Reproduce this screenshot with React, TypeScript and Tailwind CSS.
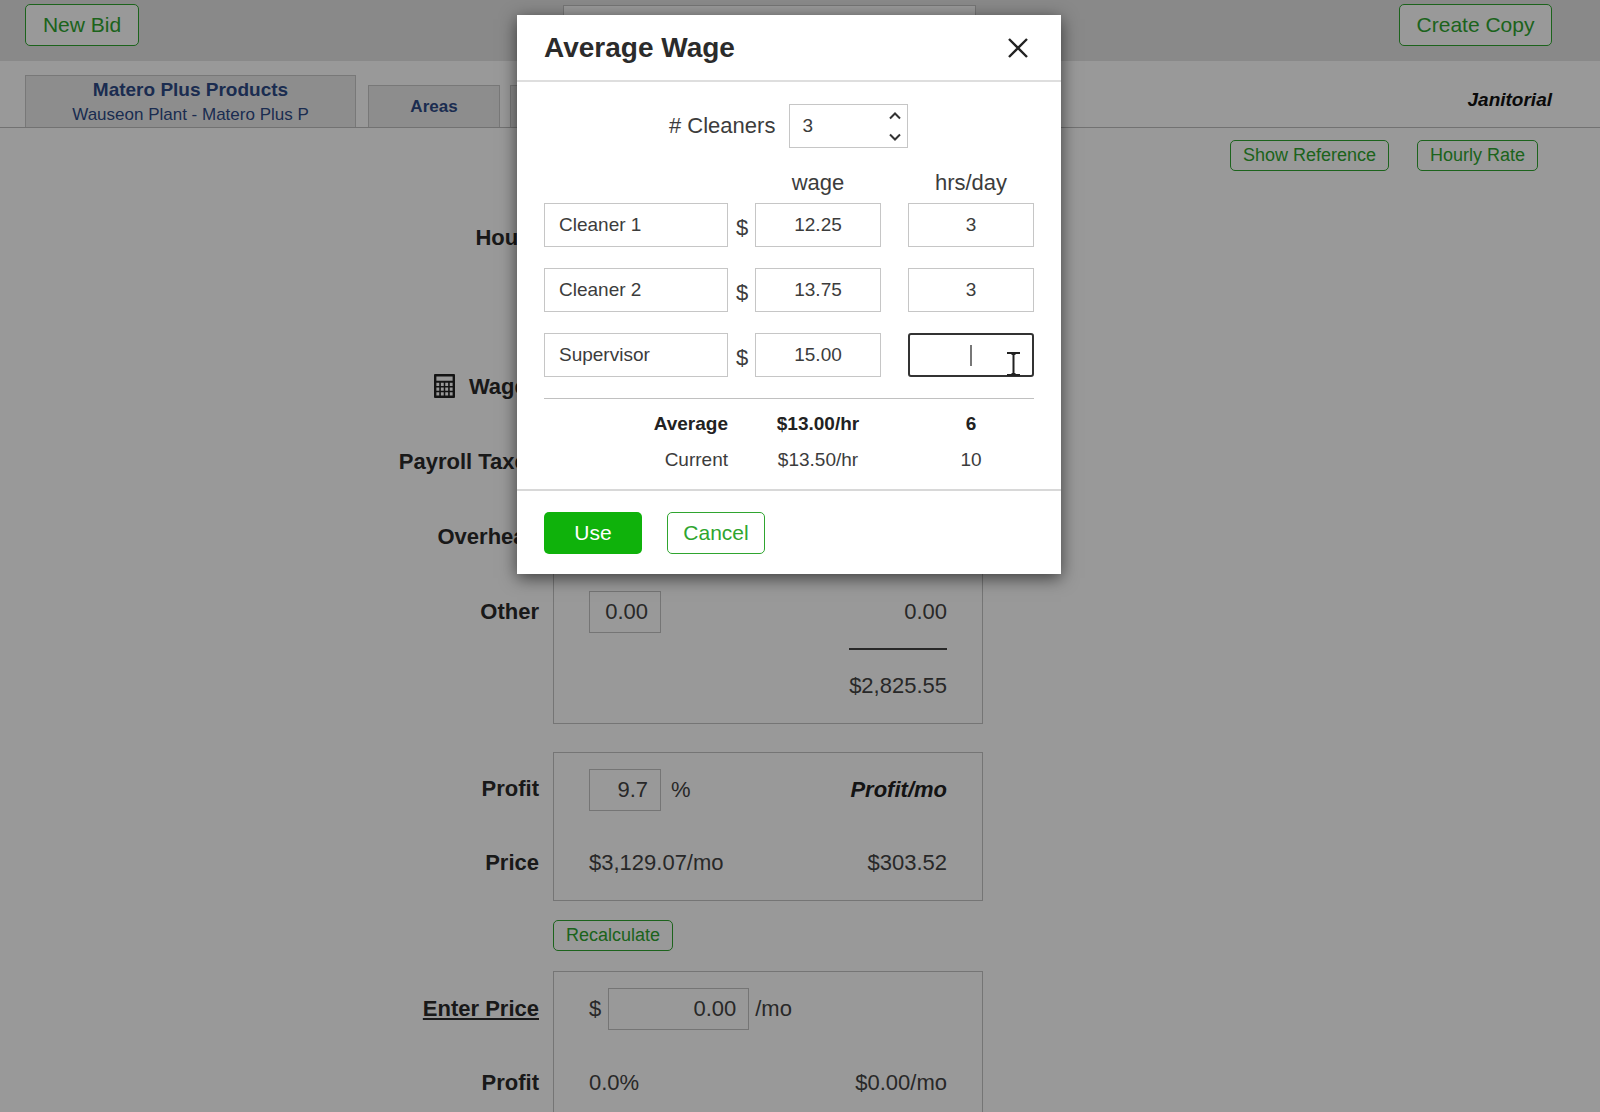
import { useState } from "react";

const rows = [
  { name: "Cleaner 1", wage: "12.25", hours: "3" },
  { name: "Cleaner 2", wage: "13.75", hours: "3" },
  { name: "Supervisor", wage: "15.00", hours: "" },
];

const outline = "border border-[#2fa52f] text-[#2fa52f] rounded-[5px] bg-white";
const largeButton = outline + " h-[42px] text-[21px] leading-6";
const smallButton = outline + " h-[31px] px-3 pb-0.5 text-[18px] leading-5";
const sectionGrid = "grid grid-cols-[539fr_430px_581fr] gap-x-[14px]";
const label = "flex h-[75px] items-center justify-end font-bold text-[#2b2b2b]";
const label74 = "flex h-[74px] items-center justify-end font-bold text-[#2b2b2b]";
const box = "border border-[#c4c4c4] px-[35px]";
const field = "border border-[#c4c4c4] bg-white text-right px-3 h-[42px] outline-none";
const tab = "flex h-[42px] w-[132px] items-center justify-center border border-b-0 border-[#c8c8c8] bg-[#ececec] text-[17px] font-bold text-[#2e4a86]";

function CalculatorIcon() {
  return (
    <svg width="21" height="24" viewBox="0 0 22 25" fill="#222" fillRule="evenodd" aria-hidden="true">
      <path d="M1 0h20a1 1 0 0 1 1 1v23a1 1 0 0 1-1 1H1a1 1 0 0 1-1-1V1a1 1 0 0 1 1-1zM2.500 2.500v4.500h17V2.500zM2.500 9v3.500h3V9zM7.200 9v3.500h3V9zM11.800 9v3.500h3V9zM16.500 9v3.500h3V9zM2.500 14v3.500h3v-3.500zM7.200 14v3.500h3v-3.500zM11.800 14v3.500h3v-3.500zM16.500 14v3.500h3v-3.500zM2.500 19v3.500h3v-3.500zM7.200 19v3.500h3v-3.500zM11.800 19v3.500h3v-3.500zM16.500 19v3.500h3v-3.500z" />
    </svg>
  );
}

function Header() {
  return (
    <header className="flex h-[61px] items-start justify-between bg-[#e4e4e4] pt-1 pr-12 pl-[25px]">
      <button className={largeButton + " w-[114px]"}>New Bid</button>
      <input aria-label="Bid" className="mt-px h-[42px] w-[413px] border border-[#c4c4c4] bg-white outline-none" />
      <button className={largeButton + " w-[153px]"}>Create Copy</button>
    </header>
  );
}

function TabBar() {
  return (
    <nav className="flex h-[67px] items-end border-b border-[#bebebe] pr-12 pl-[25px]">
      <a href="#bid" className="h-[52px] w-[331px] border border-b-0 border-[#c8c8c8] bg-[#ececec] pt-px text-center text-[#2e4a86]">
        <span className="block text-[19px] leading-[26px] font-bold">Matero Plus Products</span>
        <span className="block text-[17px] leading-6">Wauseon Plant - Matero Plus P</span>
      </a>
      <a href="#areas" className={tab + " ml-3"}>Areas</a>
      <a href="#tasks" aria-label="Next section" className={tab + " ml-[10px]"} />
      <span className="ml-auto pb-[15px] text-[19px] leading-6 font-bold text-[#111] italic">Janitorial</span>
    </nav>
  );
}

function Pricing() {
  return (
    <main className="text-[22px] leading-[26px] text-[#444]">
      <div className="flex h-[73px] items-start justify-end gap-7 pt-3 pr-10">
        <button className={smallButton}>Show Reference</button>
        <button className={smallButton}>Hourly Rate</button>
      </div>

      <section className={sectionGrid}>
        <div>
          <div className={label74}>Hours</div>
          <div className={label74}></div>
          <div className={label}>
            <button aria-label="Average wage" className="mr-[14px] mb-0.5">
              <CalculatorIcon />
            </button>
            Wages
          </div>
          <div className={label}>Payroll Taxes</div>
          <div className={label}>Overhead</div>
          <label htmlFor="other" className={label}>Other</label>
          <div className={label}></div>
        </div>
        <div className={box + " flex flex-col justify-end"}>
          <div className="flex h-[75px] items-center justify-between">
            <input id="other" defaultValue="0.00" className={field + " w-[72px]"} />
            <span>0.00</span>
          </div>
          <div className="flex h-[74px] items-center justify-end">
            <span className="relative">
              <span className="absolute -top-[25px] right-0 left-0 h-0 border-t-2 border-[#444]" />
              $2,825.55
            </span>
          </div>
        </div>
      </section>

      <section className={sectionGrid + " mt-7"}>
        <div>
          <label htmlFor="profit" className={label74}>Profit</label>
          <div className={label74}>Price</div>
        </div>
        <div className={box}>
          <div className="flex h-[73px] items-center">
            <input id="profit" defaultValue="9.7" className={field + " w-[72px]"} />
            <span className="ml-[10px]">%</span>
            <span className="ml-auto font-bold text-[#222] italic">Profit/mo</span>
          </div>
          <div className="flex h-[74px] items-center justify-between">
            <span>$3,129.07/mo</span>
            <span>$303.52</span>
          </div>
        </div>
      </section>

      <div className={sectionGrid + " pt-[19px] pb-5"}>
        <div />
        <div className="flex">
          <button className={smallButton}>Recalculate</button>
        </div>
      </div>

      <section className={sectionGrid}>
        <div>
          <label htmlFor="price" className={label + " underline"}>Enter Price</label>
          <div className={label74}>Profit</div>
          <div className={label74}></div>
        </div>
        <div className={box}>
          <div className="flex h-[74px] items-center">
            <span>$</span>
            <input id="price" defaultValue="0.00" className={field + " mr-[6px] ml-[7px] w-[141px]"} />
            <span>/mo</span>
          </div>
          <div className="flex h-[74px] items-center justify-between">
            <span>0.0%</span>
            <span>$0.00/mo</span>
          </div>
        </div>
      </section>
    </main>
  );
}

function Chevron({ up }: { up?: boolean }) {
  return (
    <svg width="12" height="8" viewBox="0 0 12 8" fill="none" stroke="#333" strokeWidth="2" aria-hidden="true">
      <path d={up ? "M1 6.500L6 1.500l5 5" : "M1 1.500l5 5 5-5"} />
    </svg>
  );
}

function WageDialog() {
  const [count, setCount] = useState(3);
  const input = "block h-11 w-full border border-[#c6c6c6] bg-white text-[19px] leading-6 outline-none";
  return (
    <div role="dialog" aria-label="Average Wage" className="w-full max-w-[544px] bg-white text-[#3c3c3c] shadow-[0_4px_16px_rgba(0,0,0,0.6)]">
      <div className="flex h-[67px] items-center justify-between border-b-2 border-[#dedede] pr-[33px] pl-[27px]">
        <h2 className="text-[28px] leading-8 font-bold text-[#2b2b2b]">Average Wage</h2>
        <button aria-label="Close">
          <svg width="20" height="20" viewBox="0 0 20 20" stroke="#222" strokeWidth="2.400" aria-hidden="true">
            <path d="M1 1l18 18M19 1L1 19" />
          </svg>
        </button>
      </div>

      <div className="px-[27px] pt-[22px]">
        <div className="flex items-center pl-[125px]">
          <label htmlFor="count" className="text-[22px] leading-[26px]"># Cleaners</label>
          <div className="relative ml-[14px] w-[119px]">
            <input
              id="count"
              inputMode="numeric"
              value={count}
              onChange={(e) => setCount(Number(e.target.value) || 0)}
              className={input + " px-3"}
            />
            <div className="absolute top-2 right-[7px] flex flex-col gap-[13px]">
              <button aria-label="More cleaners" onClick={() => setCount(count + 1)}><Chevron up /></button>
              <button aria-label="Fewer cleaners" onClick={() => setCount(count - 1)}><Chevron /></button>
            </div>
          </div>
        </div>

        <table className="mt-[22px] w-full table-fixed border-collapse">
          <colgroup>
            <col />
            <col className="w-[27px]" />
            <col className="w-[126px]" />
            <col className="w-[27px]" />
            <col className="w-[126px]" />
          </colgroup>
          <thead>
            <tr className="h-[33px] align-top text-[22px] leading-[26px]">
              <td />
              <td />
              <th className="font-normal">wage</th>
              <td />
              <th className="font-normal">hrs/day</th>
            </tr>
          </thead>
          <tbody>
            {rows.map((row) => (
              <tr key={row.name} className="h-[65px] align-top">
                <td><input aria-label="Name" defaultValue={row.name} className={input + " px-[14px]"} /></td>
                <td className="pt-[13px] pl-px text-center text-[22px] leading-6">$</td>
                <td><input aria-label={row.name + " wage"} defaultValue={row.wage} className={input + " text-center"} /></td>
                <td />
                <td>
                  {row.hours ? (
                    <input aria-label={row.name + " hours"} defaultValue={row.hours} className={input + " text-center"} />
                  ) : (
                    <div className="relative">
                      <input
                        aria-label={row.name + " hours"}
                        className="block h-11 w-full rounded-[3px] border-2 border-[#333] bg-white text-center text-[19px] caret-transparent outline-none"
                      />
                      <span className="absolute top-3 left-[62px] h-[21px] w-0.5 bg-[#777]" />
                      <svg className="absolute top-[18px] left-[98px]" width="15" height="26" viewBox="0 0 15 26" fill="none" stroke="#222" strokeWidth="2" aria-hidden="true">
                        <path d="M1 2H14M7.500 2v22M1 24H14" />
                        <path d="M5.500 3h4M5.500 23h4" />
                      </svg>
                    </div>
                  )}
                </td>
              </tr>
            ))}
          </tbody>
          <tfoot className="text-[19px] leading-6">
            <tr className="h-[44px] border-t border-[#c0c0c0] text-center font-bold text-[#222]">
              <th className="pt-2 text-right">Average</th>
              <td />
              <td className="pt-2">$13.00/hr</td>
              <td />
              <td className="pt-2">6</td>
            </tr>
            <tr className="h-9 text-center">
              <th className="text-right font-normal">Current</th>
              <td />
              <td>$13.50/hr</td>
              <td />
              <td>10</td>
            </tr>
          </tfoot>
        </table>
      </div>

      <div className="mt-[11px] flex gap-[25px] border-t-2 border-[#d8d8d8] px-[27px] pt-[21px] pb-5">
        <button className="h-[42px] w-[98px] rounded-[5px] bg-[#0fb20b] text-[21px] leading-6 text-white">Use</button>
        <button className={outline + " h-[42px] w-[98px] text-[21px] leading-6"}>Cancel</button>
      </div>
    </div>
  );
}

export default function App() {
  return (
    <div className="relative h-screen overflow-hidden bg-white font-['Liberation_Sans',Arial,sans-serif]">
      <Header />
      <TabBar />
      <div className="pr-[22px]">
        <Pricing />
      </div>
      <div className="absolute inset-0 flex items-start justify-center bg-black/40 pt-[15px] pr-[22px]">
        <WageDialog />
      </div>
    </div>
  );
}
